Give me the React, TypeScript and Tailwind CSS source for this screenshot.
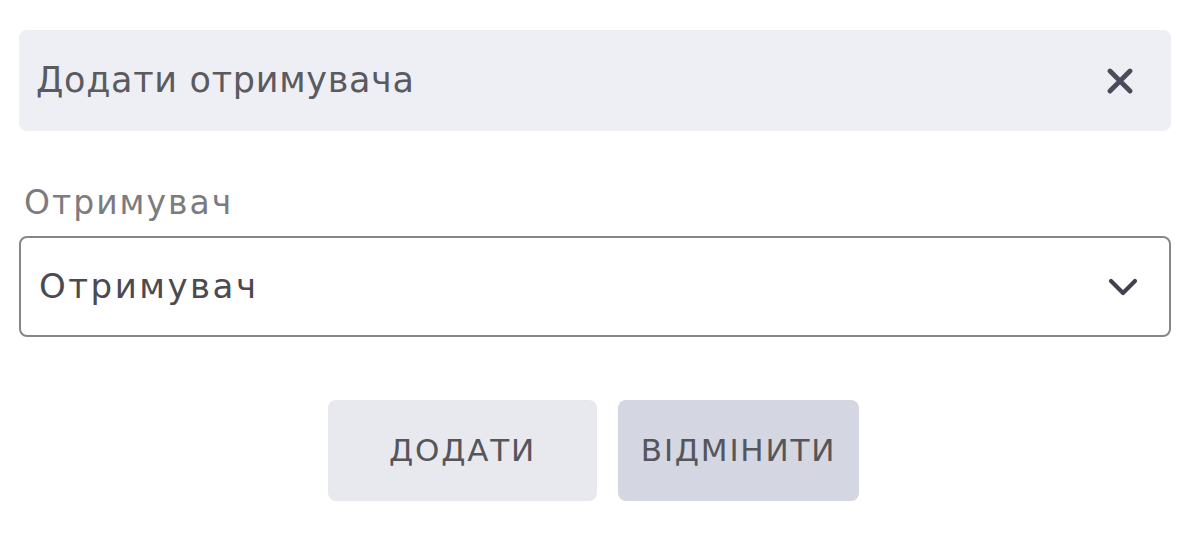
export default function App() {
  return (
    <div
      className="w-[1194px] h-[544px] bg-white pl-[19px] pr-[23px] pt-[30px]"
      style={{ fontFamily: '"DejaVu Sans", "Noto Sans", sans-serif' }}
    >
      {/* Header */}
      <div className="flex h-[101px] items-center justify-between rounded-[8px] bg-[#eeeff5] pl-[17px] pr-[38px]">
        <h2 className="text-[35px] tracking-[0.7px] text-[#5a5a5f]">Додати отримувача</h2>
        <button className="text-[#4a4c5c]">
          <svg width="26" height="26" viewBox="0 0 26 26" fill="none" stroke="currentColor" strokeWidth="4.8" strokeLinecap="round">
            <path d="M3 3 L23 23 M23 3 L3 23" />
          </svg>
        </button>
      </div>

      {/* Field */}
      <div className="mt-[52px]">
        <label className="block pl-[5px] text-[33px] leading-[40px] tracking-[2px] text-[#7b7b80]">
          Отримувач
        </label>
        <div className="mt-[13px] flex h-[101px] items-center justify-between rounded-[8px] border-2 border-[#86868b] pl-[18px] pr-[31px]">
          <span className="text-[34px] tracking-[2.5px] text-[#4a4a50]">Отримувач</span>
          <svg width="30" height="18" viewBox="0 0 30 18" fill="none" stroke="#404252" strokeWidth="4.2" strokeLinecap="round" strokeLinejoin="round">
            <path d="M3 3 L15 15 L27 3" />
          </svg>
        </div>
      </div>

      {/* Actions */}
      <div className="mt-[63px] flex justify-center gap-[21px] pr-[3px]">
        <button className="h-[101px] w-[269px] rounded-[8px] bg-[#e8e9ef] text-[31px] uppercase tracking-[1.8px] text-[#55555a]">
          Додати
        </button>
        <button className="h-[101px] w-[241px] rounded-[8px] bg-[#d4d7e1] text-[31px] uppercase tracking-[1.8px] text-[#55555a]">
          Відмінити
        </button>
      </div>
    </div>
  );
}
